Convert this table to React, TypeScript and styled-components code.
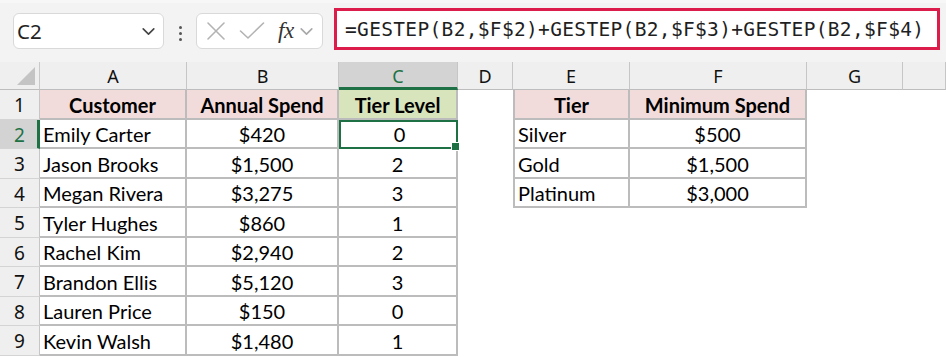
import React from "react";
import styled, { createGlobalStyle } from "styled-components";

const GlobalStyle = createGlobalStyle`
	html, body {
		margin: 0;
		padding: 0;
		background: #ffffff;
	}
	body {
		width: 946px;
		height: 357px;
		overflow: hidden;
	}
`;

const GREEN = "#1e7145";
const CELL_FONT = `Lato, "Noto Sans", sans-serif`;
const UI_FONT = `"Noto Sans", "Open Sans", sans-serif`;

const Page = styled.div`
	display: flex;
	flex-direction: column;
	width: 946px;
	height: 357px;
	background: #ffffff;
`;

const Toolbar = styled.div`
	display: flex;
	align-items: flex-start;
	height: 62px;
	box-sizing: border-box;
	padding: 8px 0 0 13px;
	background: #f3f3f3;
	border-top: 3px solid #f7f7f7;
`;

const Box = styled.div<{ $width: number }>`
	display: flex;
	align-items: center;
	box-sizing: border-box;
	width: ${(p) => p.$width}px;
	height: 36px;
	margin-top: 2px;
	background: #ffffff;
	border: 1px solid #d9d9d9;
	border-radius: 6px;
`;

const NameText = styled.span`
	flex: 1;
	padding-left: 3px;
	font-family: ${UI_FONT};
	font-size: 20.5px;
	color: #222222;
`;

const Dots = styled.div`
	display: flex;
	flex-direction: column;
	gap: 3px;
	width: 32px;
	align-items: center;
	padding-top: 15px;

	span {
		width: 3px;
		height: 3px;
		border-radius: 50%;
		background: #555555;
	}
`;

const IconSlot = styled.div<{ $ml: number }>`
	display: flex;
	align-items: center;
	margin-left: ${(p) => p.$ml}px;
`;

const Fx = styled.span`
	margin-left: 13px;
	font-family: "Liberation Serif", serif;
	font-style: italic;
	font-size: 23px;
	color: #333333;
	letter-spacing: -0.5px;
`;

const FormulaBar = styled.div`
	display: flex;
	align-items: center;
	box-sizing: border-box;
	width: 606px;
	height: 42px;
	margin-left: 11px;
	margin-top: -3px;
	padding-left: 8px;
	background: #ffffff;
	border: 3px solid #dc1c4a;
	font-family: "DejaVu Sans Mono", "Liberation Mono", monospace;
	font-size: 19.5px;
	letter-spacing: 0.33px;
	color: #1f1f1f;
	white-space: nowrap;
`;

const Sheet = styled.div`
	display: grid;
	grid-template-columns: 40px 147px 152px 119px 55px 117px 177px 96px 1fr;
	grid-template-rows: 28px;
	grid-auto-rows: 29.5px;
	background: #ffffff;
`;

const Corner = styled.div`
	position: relative;
	background: #efefef;
	border-right: 1px solid #c9c9c9;
	border-bottom: 1px solid #bdbdbd;
	box-sizing: border-box;

	&::after {
		content: "";
		position: absolute;
		right: 4px;
		bottom: 4px;
		width: 0;
		height: 0;
		border-left: 18px solid transparent;
		border-bottom: 18px solid #c4c4c4;
	}
`;

const ColHead = styled.div<{ $selected?: boolean }>`
	display: flex;
	align-items: center;
	justify-content: center;
	box-sizing: border-box;
	background: ${(p) => (p.$selected ? "#d3d3d3" : "#efefef")};
	color: ${(p) => (p.$selected ? GREEN : "#111111")};
	border-right: 1px solid #c6c6c6;
	border-bottom: ${(p) => (p.$selected ? `3px solid ${GREEN}` : "1px solid #bdbdbd")};
	font-family: ${UI_FONT};
	font-size: 18px;
	padding-top: ${(p) => (p.$selected ? "2px" : "0")};
`;

const RowHead = styled.div<{ $selected?: boolean }>`
	display: flex;
	align-items: center;
	justify-content: center;
	box-sizing: border-box;
	padding-top: 2px;
	background: ${(p) => (p.$selected ? "#d3d3d3" : "#efefef")};
	color: ${(p) => (p.$selected ? GREEN : "#111111")};
	border-right: ${(p) => (p.$selected ? `3px solid ${GREEN}` : "1px solid #c6c6c6")};
	border-bottom: 1px solid #d4d4d4;
	font-family: ${UI_FONT};
	font-size: 19px;
	padding-left: ${(p) => (p.$selected ? "2px" : "0")};
`;

type Fill = "pink" | "olive" | "none";

const fills: Record<Fill, string> = {
	pink: "#f2dcdb",
	olive: "#d8e4bc",
	none: "#ffffff",
};

const Cell = styled.div<{
	$fill?: Fill;
	$bold?: boolean;
	$align?: "left" | "center";
	$boxed?: boolean;
	$leftEdge?: boolean;
}>`
	display: flex;
	align-items: center;
	justify-content: ${(p) => (p.$align === "center" ? "center" : "flex-start")};
	box-sizing: border-box;
	padding-top: 2px;
	padding-left: ${(p) => (p.$align === "center" ? "0" : "3px")};
	background: ${(p) => fills[p.$fill ?? "none"]};
	border-right: ${(p) => (p.$boxed ? "2px solid #bcbcbc" : "none")};
	border-bottom: ${(p) => (p.$boxed ? "2px solid #bcbcbc" : "none")};
	border-left: ${(p) => (p.$leftEdge ? "2px solid #bcbcbc" : "none")};
	font-family: ${CELL_FONT};
	font-size: 20px;
	font-weight: ${(p) => (p.$bold ? 700 : 400)};
	color: #000000;
	white-space: nowrap;
	overflow: visible;
`;

const ActiveCell = styled(Cell)`
	position: relative;
	outline: 2px solid ${GREEN};
	outline-offset: -2px;
	padding-left: 4px;

	&::after {
		content: "";
		position: absolute;
		right: -4px;
		bottom: -4px;
		width: 7px;
		height: 7px;
		background: ${GREEN};
		border: 1px solid #ffffff;
	}
`;

const customers: [string, string, number][] = [
	["Emily Carter", "$420", 0],
	["Jason Brooks", "$1,500", 2],
	["Megan Rivera", "$3,275", 3],
	["Tyler Hughes", "$860", 1],
	["Rachel Kim", "$2,940", 2],
	["Brandon Ellis", "$5,120", 3],
	["Lauren Price", "$150", 0],
	["Kevin Walsh", "$1,480", 1],
];

const tiers: [string, string][] = [
	["Silver", "$500"],
	["Gold", "$1,500"],
	["Platinum", "$3,000"],
];

const Chevron: React.FC<{ color: string; size: number }> = ({ color, size }) => (
	<svg width={size} height={size} viewBox="0 0 16 16" fill="none">
		<path d="M3 5.5 L8 10.5 L13 5.5" stroke={color} strokeWidth="1.5" strokeLinecap="round" strokeLinejoin="round" />
	</svg>
);

const CrossIcon = () => (
	<svg width="20" height="20" viewBox="0 0 20 20" fill="none">
		<path d="M2 2 L18 18 M18 2 L2 18" stroke="#b3b3b3" strokeWidth="1.6" strokeLinecap="round" />
	</svg>
);

const CheckIcon = () => (
	<svg width="26" height="20" viewBox="0 0 26 20" fill="none">
		<path d="M1.5 10 L9 17 L24.5 2" stroke="#b3b3b3" strokeWidth="1.6" strokeLinecap="round" strokeLinejoin="round" />
	</svg>
);

export default function App() {
	const cols = ["A", "B", "C", "D", "E", "F", "G", ""];

	return (
		<Page>
			<GlobalStyle />
			<Toolbar>
				<Box $width={151}>
					<NameText>C2</NameText>
					<IconSlot $ml={0} style={{ marginRight: 6 }}>
						<Chevron color="#444444" size={17} />
					</IconSlot>
				</Box>
				<Dots>
					<span />
					<span />
					<span />
				</Dots>
				<Box $width={127}>
					<IconSlot $ml={9}>
						<CrossIcon />
					</IconSlot>
					<IconSlot $ml={13}>
						<CheckIcon />
					</IconSlot>
					<Fx>fx</Fx>
					<IconSlot $ml={4}>
						<Chevron color="#a8a8a8" size={17} />
					</IconSlot>
				</Box>
				<FormulaBar>=GESTEP(B2,$F$2)+GESTEP(B2,$F$3)+GESTEP(B2,$F$4)</FormulaBar>
			</Toolbar>

			<Sheet>
				<Corner />
				{cols.map((c, i) => (
					<ColHead key={i} $selected={c === "C"}>
						{c}
					</ColHead>
				))}

				<RowHead>1</RowHead>
				<Cell $fill="pink" $bold $align="center" $boxed>Customer</Cell>
				<Cell $fill="pink" $bold $align="center" $boxed>Annual Spend</Cell>
				<Cell $fill="olive" $bold $align="center" $boxed>Tier Level</Cell>
				<Cell />
				<Cell $fill="pink" $bold $align="center" $boxed $leftEdge>Tier</Cell>
				<Cell $fill="pink" $bold $align="center" $boxed>Minimum Spend</Cell>
				<Cell />
				<Cell />

				{customers.map(([name, spend, level], i) => {
					const tier = tiers[i];
					return (
						<React.Fragment key={name}>
							<RowHead $selected={i === 0}>{i + 2}</RowHead>
							<Cell $boxed>{name}</Cell>
							<Cell $boxed $align="center">{spend}</Cell>
							{i === 0 ? (
								<ActiveCell $boxed $align="center">{level}</ActiveCell>
							) : (
								<Cell $boxed $align="center">{level}</Cell>
							)}
							<Cell />
							{tier ? (
								<>
									<Cell $boxed $leftEdge>{tier[0]}</Cell>
									<Cell $boxed $align="center">{tier[1]}</Cell>
								</>
							) : (
								<>
									<Cell />
									<Cell />
								</>
							)}
							<Cell />
							<Cell />
						</React.Fragment>
					);
				})}
			</Sheet>
		</Page>
	);
}
